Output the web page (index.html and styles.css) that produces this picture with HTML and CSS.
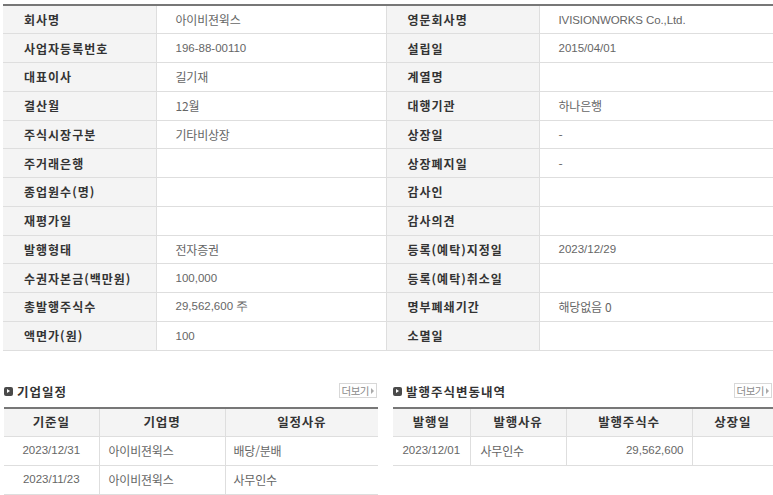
FILE: index.html
```html
<!DOCTYPE html>
<html lang="ko">
<head>
<meta charset="utf-8">
<link rel="stylesheet" href="styles.css">
</head>
<body>
<div class="page">
  <table class="info">
    <colgroup><col class="c-l"><col class="c-v1"><col class="c-l"><col class="c-v2"></colgroup>
    <tbody>
      <tr><th>회사명</th><td>아이비젼윅스</td><th>영문회사명</th><td class="en">IVISIONWORKS Co.,Ltd.</td></tr>
      <tr><th>사업자등록번호</th><td class="num">196-88-00110</td><th>설립일</th><td class="num">2015/04/01</td></tr>
      <tr><th>대표이사</th><td>길기재</td><th>계열명</th><td></td></tr>
      <tr><th>결산월</th><td>12월</td><th>대행기관</th><td>하나은행</td></tr>
      <tr><th>주식시장구분</th><td>기타비상장</td><th>상장일</th><td>-</td></tr>
      <tr><th>주거래은행</th><td></td><th>상장폐지일</th><td>-</td></tr>
      <tr><th>종업원수(명)</th><td></td><th>감사인</th><td></td></tr>
      <tr><th>재평가일</th><td></td><th>감사의견</th><td></td></tr>
      <tr><th>발행형태</th><td>전자증권</td><th>등록(예탁)지정일</th><td class="num">2023/12/29</td></tr>
      <tr><th>수권자본금(백만원)</th><td class="num">100,000</td><th>등록(예탁)취소일</th><td></td></tr>
      <tr><th>총발행주식수</th><td class="num">29,562,600 주</td><th>명부폐쇄기간</th><td>해당없음 0</td></tr>
      <tr><th>액면가(원)</th><td class="num">100</td><th>소멸일</th><td></td></tr>
    </tbody>
  </table>

  <div class="bottom">
    <section class="box box-left">
      <div class="box-head">
        <h3 class="box-title"><span class="ico"></span>기업일정</h3>
        <a class="more">더보기<span class="more-arr"></span></a>
      </div>
      <table class="list">
        <colgroup><col class="w95"><col class="w126"><col></colgroup>
        <thead><tr><th>기준일</th><th>기업명</th><th>일정사유</th></tr></thead>
        <tbody>
          <tr><td class="ctr num">2023/12/31</td><td>아이비젼윅스</td><td>배당/분배</td></tr>
          <tr><td class="ctr num">2023/11/23</td><td>아이비젼윅스</td><td>사무인수</td></tr>
        </tbody>
      </table>
    </section>
    <section class="box box-right">
      <div class="box-head">
        <h3 class="box-title"><span class="ico"></span>발행주식변동내역</h3>
        <a class="more">더보기<span class="more-arr"></span></a>
      </div>
      <table class="list">
        <colgroup><col class="w77"><col class="w96"><col class="w126"><col></colgroup>
        <thead><tr><th>발행일</th><th>발행사유</th><th>발행주식수</th><th>상장일</th></tr></thead>
        <tbody>
          <tr><td class="ctr num">2023/12/01</td><td>사무인수</td><td class="rgt num">29,562,600</td><td></td></tr>
        </tbody>
      </table>
    </section>
  </div>
</div>
</body>
</html>
```

FILE: styles.css
```css
* { box-sizing: border-box; }
html, body { margin: 0; padding: 0; background: #fff; }
body {
  font-family: "Liberation Sans", "Noto Sans CJK KR", sans-serif;
  font-size: 12px;
  color: #555;
}
.page { padding: 4px 0 0 3px; width: 773px; overflow: hidden; }

table { border-collapse: collapse; table-layout: fixed; }

.info { width: 772px; border-top: 2px solid #777; }
.info .c-l { width: 153px; }
.info .c-v1 { width: 230px; }
.info .c-v2 { width: 236px; }
.info tr { height: 28.75px; }
.info th, .info td {
  border-bottom: 1px solid #dedede;
  border-right: 1px solid #dedede;
  padding: 0;
  vertical-align: middle;
  white-space: nowrap;
}
.info th {
  background: #f4f4f4;
  color: #333;
  font-weight: bold;
  text-align: left;
  padding-left: 21px;
  font-size: 12px;
  letter-spacing: 1px;
  font-family: "Noto Sans CJK KR", sans-serif;
}
.info td {
  padding-left: 19px;
  color: #666;
  font-family: "Noto Sans CJK KR", sans-serif;
  font-size: 12px;
  letter-spacing: -0.2px;
}
.info td.num, .info td.en {
  font-family: "Liberation Sans", sans-serif;
  font-size: 11.5px;
  letter-spacing: 0;
}
.info td.en { letter-spacing: -0.1px; }

.bottom {
  display: flex;
  gap: 15px;
  margin-top: 28px;
  padding-left: 1px;
}
.box-left { width: 375px; }
.box-right { width: 380px; flex: none; }
.box-head {
  display: flex;
  justify-content: space-between;
  align-items: center;
  height: 28px;
  padding-bottom: 2px;
}
.box-title {
  margin: 0;
  font-family: "Noto Sans CJK KR", sans-serif;
  font-size: 12.5px;
  font-weight: bold;
  color: #333;
  display: flex;
  align-items: center;
  gap: 4px;
  letter-spacing: 1px;
}
.ico {
  width: 9px; height: 9px;
  background: #4a4a4a;
  border-radius: 2px;
  position: relative;
  display: inline-block;
}
.ico::after {
  content: "";
  position: absolute;
  left: 3px; top: 2px;
  border-left: 3px solid #fff;
  border-top: 2.5px solid transparent;
  border-bottom: 2.5px solid transparent;
}
.more {
  display: flex;
  align-items: center;
  height: 15px;
  padding: 0 2px;
  border: 1px solid #d8d8d8;
  font-family: "Noto Sans CJK KR", sans-serif;
  font-size: 10.5px;
  color: #8a8a8a;
  letter-spacing: -0.5px;
  margin-right: 1px;
  margin-top: -2px;
}
.more-arr {
  display: inline-block;
  margin-left: 2px;
  border-left: 3px solid #aaa;
  border-top: 3px solid transparent;
  border-bottom: 3px solid transparent;
}

.w95 { width: 95px; }
.w126 { width: 126px; }
.w77 { width: 77px; }
.w96 { width: 96px; }

.list { width: 100%; border-top: 2px solid #777; }
.list th {
  background: #f4f4f4;
  height: 29px;
  font-family: "Noto Sans CJK KR", sans-serif;
  font-weight: bold;
  color: #333;
  font-size: 12.5px;
  letter-spacing: 0.8px;
  border-right: 1px solid #dedede;
  border-bottom: 1px solid #dedede;
  padding: 0 0 2px;
}
.list td {
  height: 29px;
  border-right: 1px solid #dedede;
  border-bottom: 1px solid #dedede;
  padding: 0 8px 2px;
  color: #666;
  font-family: "Noto Sans CJK KR", sans-serif;
  font-size: 12px;
  letter-spacing: -0.2px;
  white-space: nowrap;
}
.list th:last-child, .list td:last-child { border-right: 0; }
.list td.num { font-family: "Liberation Sans", sans-serif; font-size: 11.5px; letter-spacing: 0; }
.list td.ctr { text-align: center; padding: 0 0 2px; }
.list td.rgt { text-align: right; }
.box-right .list td:nth-child(2) { padding-left: 10px; }
.box-left .list td:nth-child(2) { padding-left: 9px; }
```
